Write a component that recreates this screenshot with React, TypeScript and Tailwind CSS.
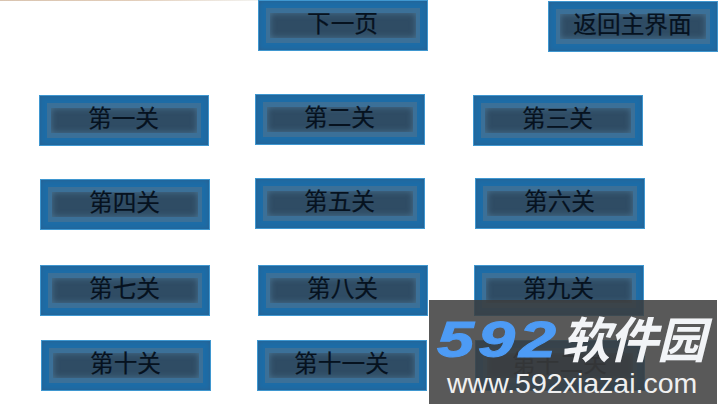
const cjk = "font-['Noto_Sans_CJK_SC','Liberation_Sans',sans-serif]";

function LevelButton({ label, className }: { label: string; className: string }) {
  return (
    <div className={`h-[51px] w-[170px] shrink-0 border border-[#3f97d0] bg-[#1d6ca6] p-[7px] shadow-[inset_0_0_4px_#2a5f8e] ${className}`}>
      <div className="h-full bg-[#3b7098] px-[4px] py-[5px]">
        <div className={`flex h-full items-center justify-center bg-[#2f4c64] pb-[6px] pr-[1px] text-[23.7px] leading-none text-[#06121f] shadow-[inset_0_0_6px_#4a7594] [-webkit-text-stroke:0.2px_#06121f] ${cjk}`}>
          {label}
        </div>
      </div>
    </div>
  );
}

export default function App() {
  return (
    <div className="relative flex h-[405px] w-[720px] flex-col overflow-hidden bg-white">
      <div className="h-px w-[260px] shrink-0 bg-gradient-to-r from-[#d9c4b0] via-[#e2cdb9] to-[#f3f3f0]" />

      <div className="flex -mt-px">
        <LevelButton label="下一页" className="ml-[258px]" />
        <LevelButton label="返回主界面" className="ml-[120px] mt-px" />
      </div>

      <div className="mt-[42px] flex">
        <LevelButton label="第一关" className="ml-[39px] mt-px" />
        <LevelButton label="第二关" className="ml-[46px]" />
        <LevelButton label="第三关" className="ml-[48px] mt-px" />
      </div>

      <div className="mt-[32px] flex">
        <LevelButton label="第四关" className="ml-[40px] mt-px" />
        <LevelButton label="第五关" className="ml-[45px]" />
        <LevelButton label="第六关" className="ml-[50px]" />
      </div>

      <div className="mt-[35px] flex">
        <LevelButton label="第七关" className="ml-[40px]" />
        <LevelButton label="第八关" className="ml-[48px]" />
        <LevelButton label="第九关" className="ml-[46px]" />
      </div>

      <div className="mt-[24px] flex">
        <LevelButton label="第十关" className="ml-[41px]" />
        <LevelButton label="第十一关" className="ml-[46px]" />
        <LevelButton label="第十二关" className="ml-[48px]" />
      </div>

      {/* site watermark over the corner */}
      <div className="absolute left-[429px] top-[300px] flex h-[104px] w-[288px] flex-col bg-[#3c3c3c]/85 pl-[8px]">
        <div className="mt-[16px] flex h-[48px] items-center">
          <div className="w-[124px] shrink-0">
            <span className="inline-block origin-left scale-x-[1.33] font-['Liberation_Sans',sans-serif] text-[50px] font-bold italic leading-none tracking-[3px] text-[#4d9bf5] [-webkit-text-stroke:1px_#4d9bf5]">
              592
            </span>
          </div>
          <span className={`pb-[7px] text-[49px] font-bold italic leading-none tracking-[-1px] text-[#f2f4f7] ${cjk}`}>
            软件园
          </span>
        </div>
        <div className="ml-[10px] mt-[5px] font-['Liberation_Sans',sans-serif] text-[28.5px] leading-none text-[#f0f0f0]">
          www.592xiazai.com
        </div>
      </div>
    </div>
  );
}
